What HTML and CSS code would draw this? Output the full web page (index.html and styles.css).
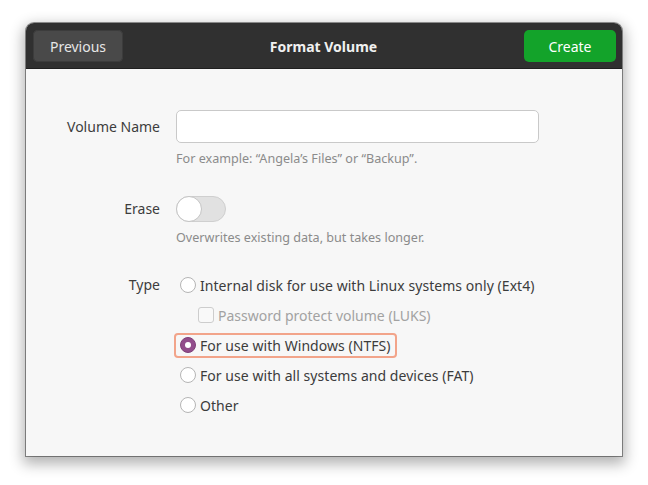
FILE: index.html
```html
<!DOCTYPE html>
<html>
<head>
<meta charset="utf-8">
<link rel="stylesheet" href="styles.css">
</head>
<body>
<div class="window">
  <header class="headerbar">
    <button class="btn btn-prev">Previous</button>
    <div class="title">Format Volume</div>
    <button class="btn btn-create">Create</button>
  </header>
  <main class="content">
    <div class="label label-name">Volume Name</div>
    <div class="field">
      <input class="entry" type="text">
      <div class="hint hint-name">For example: “Angela’s Files” or “Backup”.</div>
    </div>

    <div class="label label-erase">Erase</div>
    <div class="field field-erase">
      <div class="switch"><span class="knob"></span></div>
      <div class="hint hint-erase">Overwrites existing data, but takes longer.</div>
    </div>

    <div class="label label-type">Type</div>
    <div class="field field-type">
      <div class="row"><span class="option"><span class="radio"></span>Internal disk for use with Linux systems only (Ext4)</span></div>
      <div class="row"><span class="check-opt"><span class="checkbox"></span>Password protect volume (LUKS)</span></div>
      <div class="row"><span class="option focused"><span class="radio checked"></span>For use with Windows (NTFS)</span></div>
      <div class="row"><span class="option"><span class="radio"></span>For use with all systems and devices (FAT)</span></div>
      <div class="row"><span class="option"><span class="radio"></span>Other</span></div>
    </div>
  </main>
</div>
</body>
</html>
```
FILE: styles.css
```css
html, body {
  margin: 0;
  padding: 0;
  background: #ffffff;
}
body {
  font-family: "Noto Sans", "DejaVu Sans", sans-serif;
  font-size: 14px;
  color: #3d3d3d;
  padding: 23px 0 29px 26px;
}
.window {
  width: 596px;
  height: 433px;
  background: #f7f7f7;
  border-radius: 8px 8px 0 0;
  box-shadow: 0 0 0 1px rgba(0,0,0,0.4), 0 5px 14px 3px rgba(0,0,0,0.3);
  overflow: hidden;
  display: flex;
  flex-direction: column;
}
.headerbar {
  height: 46px;
  flex: none;
  background: #303030;
  border-bottom: 1px solid #1f1f1f;
  box-sizing: border-box;
  display: flex;
  align-items: center;
  justify-content: space-between;
  padding: 0 6px 0 7px;
}
.btn {
  height: 32px;
  border: none;
  border-radius: 5px;
  font-family: inherit;
  font-size: 14px;
  padding: 0;
  margin-top: 1px;
}
.btn-prev {
  width: 90px;
  background: #494949;
  color: #e6e6e6;
  box-shadow: inset 0 0 0 1px #3c3c3c;
}
.btn-create {
  width: 92px;
  background: #13a32a;
  color: #ffffff;
}
.title {
  color: #f0f0f0;
  font-weight: bold;
  font-size: 14px;
  margin-top: 1px;
}
.content {
  flex: 1;
  display: grid;
  grid-template-columns: 134px 363px;
  column-gap: 16px;
  align-content: start;
  padding-top: 41px;
}
.label {
  text-align: right;
  color: #3d3d3d;
}
.label-name {
  line-height: 33px;
}
.entry {
  display: block;
  box-sizing: border-box;
  width: 363px;
  height: 33px;
  margin: 0;
  border: 1px solid #c9c9c9;
  border-radius: 5px;
  background: #ffffff;
}
.hint {
  font-size: 12.6px;
  line-height: 16px;
  color: #8b8b8b;
  margin-top: 8px;
  white-space: nowrap;
}
.label-erase {
  margin-top: 29px;
  line-height: 26px;
}
.field-erase {
  margin-top: 29px;
}
.switch {
  box-sizing: border-box;
  width: 50px;
  height: 26px;
  border-radius: 13px;
  background: #e1e1e1;
  border: 1px solid #cfcfcf;
  position: relative;
}
.knob {
  position: absolute;
  left: -1px;
  top: -1px;
  box-sizing: border-box;
  width: 26px;
  height: 26px;
  border-radius: 50%;
  background: #ffffff;
  border: 1px solid #c4c4c4;
}
.label-type {
  margin-top: 24px;
  line-height: 29px;
}
.field-type {
  margin-top: 24px;
}
.row {
  height: 30px;
  display: flex;
  align-items: center;
}
.option {
  display: inline-flex;
  align-items: center;
  height: 25px;
  box-sizing: border-box;
  margin-left: -2px;
  padding: 0 4px;
  border: 2px solid transparent;
  border-radius: 4px;
  color: #3c3c3c;
  white-space: nowrap;
  letter-spacing: 0.05px;
}
.option.focused {
  border-color: #f2a48a;
}
.radio {
  box-sizing: border-box;
  width: 16px;
  height: 16px;
  border-radius: 50%;
  border: 1px solid #b5b5b5;
  background: #ffffff;
  margin-right: 4px;
  flex: none;
  position: relative;
}
.radio.checked {
  background: #924d8b;
  border-color: #7f3f78;
}
.radio.checked::after {
  content: "";
  position: absolute;
  left: 4px;
  top: 4px;
  width: 6px;
  height: 6px;
  border-radius: 50%;
  background: #ffffff;
}
.check-opt {
  display: inline-flex;
  align-items: center;
  margin-left: 22px;
  color: #a2a2a2;
  white-space: nowrap;
}
.checkbox {
  box-sizing: border-box;
  width: 16px;
  height: 16px;
  border: 1px solid #cdcdcd;
  border-radius: 3px;
  background: #f9f9f9;
  margin-right: 4px;
}
```
